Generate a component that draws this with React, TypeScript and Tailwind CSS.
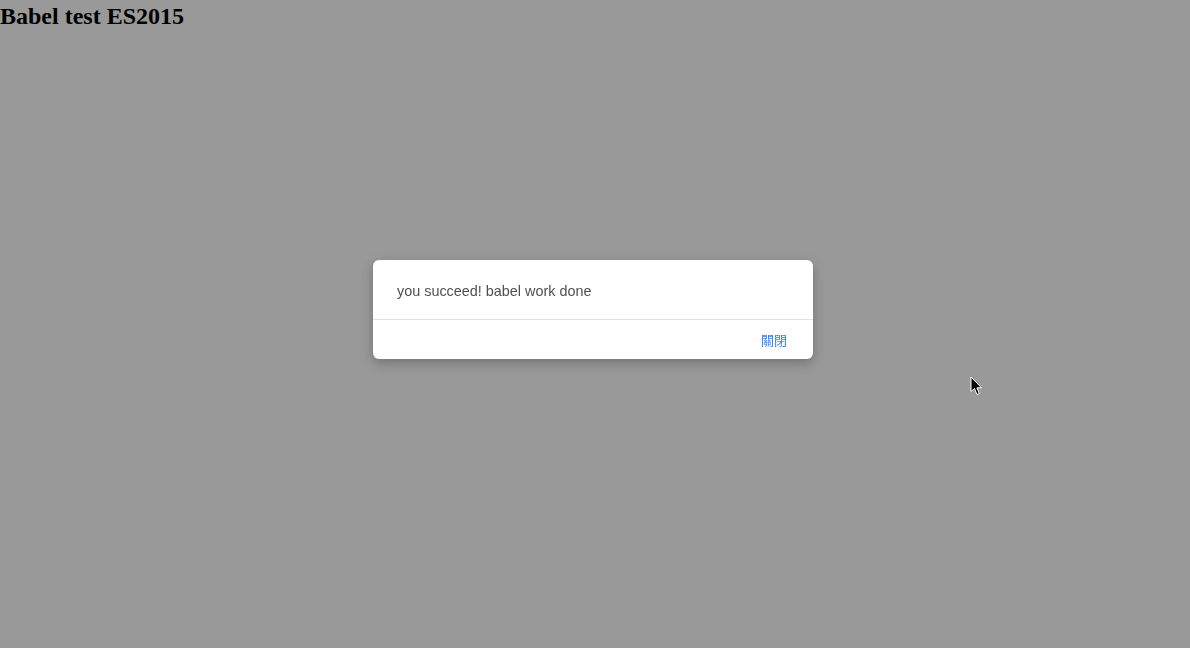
export default function App() {
  return (
    <div className="min-h-[648px] bg-[#999999]">
      <h1
        className="m-0 text-[24px] font-bold leading-[32px] text-black"
        style={{ fontFamily: '"Liberation Serif", "Times New Roman", serif' }}
      >
        Babel test ES2015
      </h1>

      {/* Dialog */}
      <div className="fixed inset-0 flex items-start justify-center pt-[260px] pr-[4px]">
        <div
          className="w-[440px] overflow-hidden rounded-[6px] bg-white shadow-[0_4px_12px_rgba(0,0,0,0.25)]"
          style={{ fontFamily: '"Liberation Sans", Arial, sans-serif' }}
        >
          <div className="border-b border-[#e3e3e3] px-6 pt-[22px] pb-[19px] text-[14.4px] leading-[18px] text-[#4f4f4f]">
            you succeed! babel work done
          </div>
          <div className="flex h-[39px] items-center justify-end px-[26px] pt-[2px]">
            <button
              className="text-[13px] leading-none text-[#3280f0]"
              style={{ fontFamily: '"Liberation Sans", "Noto Sans CJK TC", sans-serif' }}
            >
              關閉
            </button>
          </div>
        </div>
      </div>

      {/* Mouse cursor */}
      <svg
        className="absolute left-[970px] top-[376px]"
        width="14"
        height="20"
        viewBox="0 0 14 20"
      >
        <path
          d="M1 1 L1 15.5 L4.5 12.5 L7 18.5 L9.3 17.5 L6.9 11.8 L11.5 11.8 Z"
          fill="#000"
          stroke="#fff"
          strokeWidth="1"
          strokeLinejoin="round"
        />
      </svg>
    </div>
  );
}
